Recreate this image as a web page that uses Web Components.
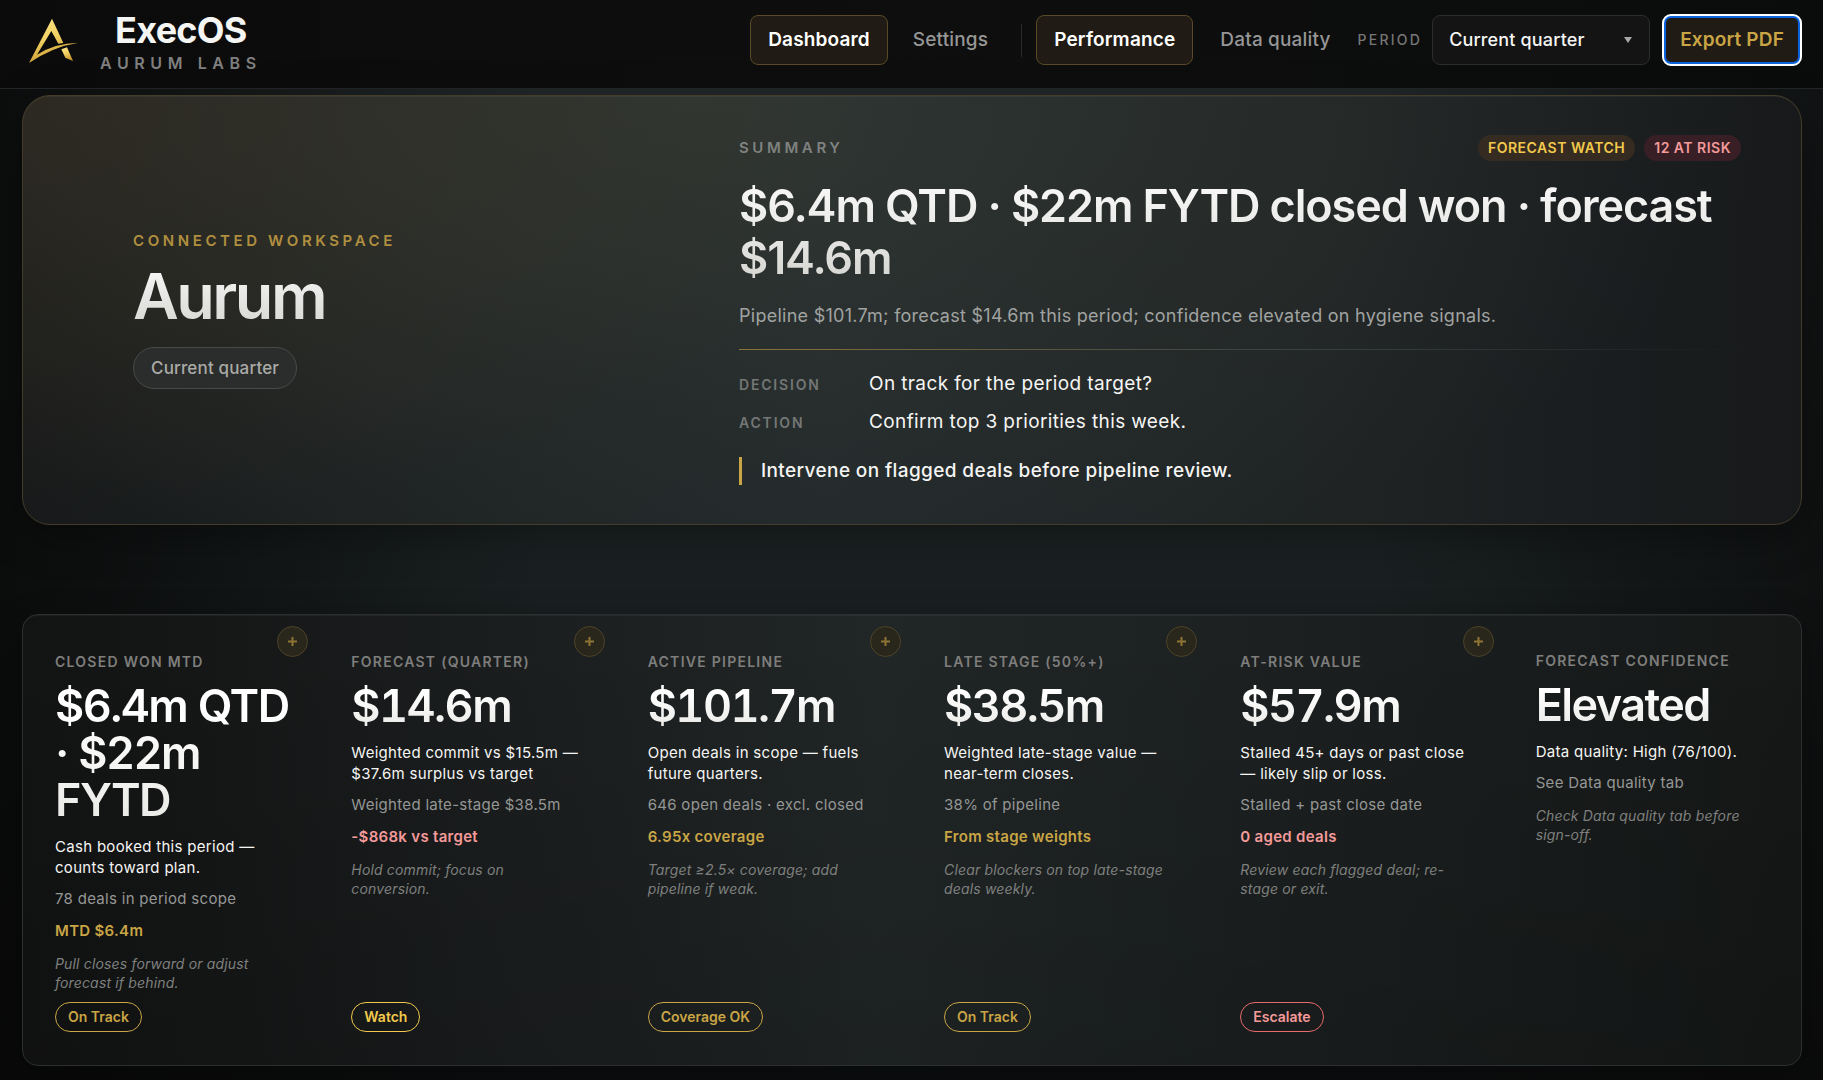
<!DOCTYPE html>
<html lang="en">
<head>
<meta charset="utf-8">
<meta name="viewport" content="width=device-width, initial-scale=1">
<title>ExecOS</title>
<style>
  :root {
    --text: #f5f5f3;
    --gold: #c9a545;
    --amber: #f2c94c;
    --rose: #f49a9a;
  }
  body {
    margin: 0;
    min-height: 100vh;
    font: 16px/1.4 Inter, "Liberation Sans", sans-serif;
    letter-spacing: 0.01em;
    color: var(--text);
    background:
      linear-gradient(90deg, rgba(8,8,8,.85) 0, rgba(8,8,8,0) 30%, rgba(8,8,8,0) 75%, rgba(10,10,10,.7) 100%),
      linear-gradient(180deg, #232a2c 0, #1a2021 54%, #0c0d0e 100%);
  }
</style>
</head>
<body>
<exec-header></exec-header>
<exec-main>
  <exec-hero workspace="Aurum" period="Current quarter">
    <status-pill slot="pills" tone="watch">Forecast watch</status-pill>
    <status-pill slot="pills" tone="risk">12 at risk</status-pill>
    <span slot="title">$6.4m QTD · $22m FYTD closed won · forecast $14.6m</span>
    <span slot="sub">Pipeline $101.7m; forecast $14.6m this period; confidence elevated on hygiene signals.</span>
    <span slot="decision">On track for the period target?</span>
    <span slot="action">Confirm top 3 priorities this week.</span>
    <span slot="callout">Intervene on flagged deals before pipeline review.</span>
  </exec-hero>
  <kpi-strip>
    <kpi-card expandable chip="On Track" tone="gold">
      <span slot="label">Closed won MTD</span><span slot="value">$6.4m QTD · $22m FYTD</span>
      <span slot="lead">Cash booked this period — counts toward plan.</span><span slot="meta">78 deals in period scope</span>
      <span slot="delta">MTD $6.4m</span><span slot="note">Pull closes forward or adjust forecast if behind.</span>
    </kpi-card>
    <kpi-card expandable chip="Watch" tone="amber" delta="down">
      <span slot="label">Forecast (quarter)</span><span slot="value">$14.6m</span>
      <span slot="lead">Weighted commit vs $15.5m — $37.6m surplus vs target</span><span slot="meta">Weighted late-stage $38.5m</span>
      <span slot="delta">-$868k vs target</span><span slot="note">Hold commit; focus on conversion.</span>
    </kpi-card>
    <kpi-card expandable chip="Coverage OK" tone="gold">
      <span slot="label">Active pipeline</span><span slot="value">$101.7m</span>
      <span slot="lead">Open deals in scope — fuels future quarters.</span><span slot="meta">646 open deals · excl. closed</span>
      <span slot="delta">6.95x coverage</span><span slot="note">Target ≥2.5× coverage; add pipeline if weak.</span>
    </kpi-card>
    <kpi-card expandable chip="On Track" tone="gold">
      <span slot="label">Late stage (50%+)</span><span slot="value">$38.5m</span>
      <span slot="lead">Weighted late-stage value — near-term closes.</span><span slot="meta">38% of pipeline</span>
      <span slot="delta">From stage weights</span><span slot="note">Clear blockers on top late-stage deals weekly.</span>
    </kpi-card>
    <kpi-card expandable chip="Escalate" tone="rose" delta="down">
      <span slot="label">At-risk value</span><span slot="value">$57.9m</span>
      <span slot="lead">Stalled 45+ days or past close — likely slip or loss.</span><span slot="meta">Stalled + past close date</span>
      <span slot="delta">0 aged deals</span><span slot="note">Review each flagged deal; re-stage or exit.</span>
    </kpi-card>
    <kpi-card>
      <span slot="label">Forecast confidence</span><span slot="value">Elevated</span>
      <span slot="lead">Data quality: High (76/100).</span><span slot="meta">See Data quality tab</span>
      <span slot="note">Check Data quality tab before sign-off.</span>
    </kpi-card>
  </kpi-strip>
</exec-main>

<script>
class Base extends HTMLElement {
  connectedCallback() {
    if (!this.shadowRoot) this.attachShadow({ mode: 'open' }).innerHTML =
      '<style>*{box-sizing:border-box}h1,h2,h3,p,dl,dd,dt{margin:0}</style>' + this.render();
  }
}

customElements.define('exec-logo', class extends Base {
  render() { return `
    <style>:host{display:block}svg{display:block;width:52px;height:47px}</style>
    <svg viewBox="85 50 156 141" aria-hidden="true">
      <defs><linearGradient id="g" x1="0" y1="0" x2=".35" y2="1">
        <stop offset="0" stop-color="#fbe58c"/><stop offset=".5" stop-color="#f3d264"/><stop offset="1" stop-color="#c99a2e"/>
      </linearGradient></defs>
      <path fill="url(#g)" d="M157 55 L191 128 L176 130 L155 92 L112 163 Q166 128 236 127 Q160 139 88 188 Z"/>
      <path fill="url(#g)" d="M185 147 L202 141 L220 182 L197 172 Z"/>
    </svg>`; }
});

customElements.define('nav-tab', class extends Base {
  render() {
    const on = this.hasAttribute('active');
    const inner = '<slot></slot>';
    const el = this.hasAttribute('href')
      ? `<a href="${this.getAttribute('href')}" ${on ? 'aria-current="page"' : ''}>${inner}</a>`
      : `<button type="button" aria-pressed="${on}">${inner}</button>`;
    return `<style>
      :host{display:block}
      a,button{display:flex;align-items:center;height:50px;padding:0 17px;border:1px solid transparent;border-radius:8px;
        background:none;color:#969696;font:500 19px/28px Inter,"Liberation Sans",sans-serif;letter-spacing:inherit;text-decoration:none;white-space:nowrap}
      :host([active]) a,:host([active]) button{color:#fff;font-weight:600;background:#201b14;border-color:#5a4a28}
    </style>${el}`;
  }
});

customElements.define('exec-header', class extends Base {
  render() { return `<style>
      :host{display:block;background:linear-gradient(90deg,#0a0b0a,#0e0e0e 50%,#0a0c0b);border-bottom:1px solid #222727}
      header{display:flex;align-items:center;justify-content:space-between;height:88px;padding:0 22px 8px 28px}
      .brand{display:flex;align-items:center;gap:20px}
      .names{display:flex;flex-direction:column;align-items:center;padding-top:5px}
      .name{font-size:36px;line-height:36px;font-weight:700;letter-spacing:-0.02em}
      .org{font-size:16px;line-height:20px;padding-top:5px;font-weight:600;letter-spacing:.35em;text-transform:uppercase;color:#808080}
      .tools{display:flex;align-items:center}
      nav{display:flex;gap:7px}
      .views{display:flex;gap:9px}
      .sep{width:1px;height:33px;margin:0 14px 0 15px;background:#2a2a2a}
      label{padding:0 10px 0 9px;font-size:14px;font-weight:500;letter-spacing:.16em;text-transform:uppercase;color:#777}
      .pick{display:grid;align-items:center;width:218px}
      .pick>*{grid-area:1/1}
      select{appearance:none;width:100%;height:50px;padding:0 40px 0 16px;border:1px solid #2c2c2c;border-radius:8px;background:#141414;
        color:var(--text);font:500 18px/24px Inter,"Liberation Sans",sans-serif;letter-spacing:inherit}
      svg{justify-self:end;width:8px;height:6px;margin-right:18px;pointer-events:none}
      .export{height:50px;margin-left:13px;padding:0 14px;border:3px solid #0a63dc;border-radius:8px;outline:2px solid #fff;outline-offset:-1px;background:#201b14;
        color:var(--gold);font:600 19px/28px Inter,"Liberation Sans",sans-serif;letter-spacing:inherit;white-space:nowrap}
    </style>
    <header>
      <div class="brand"><exec-logo></exec-logo><div class="names"><span class="name">ExecOS</span><span class="org">Aurum Labs</span></div></div>
      <div class="tools">
        <nav><nav-tab href="#dashboard" active>Dashboard</nav-tab><nav-tab href="#settings">Settings</nav-tab></nav>
        <span class="sep"></span>
        <div class="views"><nav-tab active>Performance</nav-tab><nav-tab>Data quality</nav-tab></div>
        <label for="period">Period</label>
        <div class="pick"><select id="period"><option>Current quarter</option></select>
          <svg viewBox="0 0 8 6" aria-hidden="true"><path fill="#a8a8a8" d="M0 0h8L4 6z"/></svg></div>
        <button class="export" type="button">Export PDF</button>
      </div>
    </header>`; }
});

customElements.define('exec-main', class extends Base {
  render() { return `<style>:host{display:flex;flex-direction:column;gap:89px;padding:6px 21px 14px 22px}</style><slot></slot>`; }
});

customElements.define('status-pill', class extends Base {
  render() { return `<style>
      :host{display:block;padding:0 10px;border-radius:13px;font-size:14px;line-height:26px;font-weight:600;letter-spacing:.035em;text-transform:uppercase;white-space:nowrap}
      :host([tone=watch]){color:var(--amber);background:#352b20}
      :host([tone=risk]){color:var(--rose);background:#381f26}
    </style><slot></slot>`; }
});

customElements.define('exec-hero', class extends Base {
  render() { return `<style>
      :host{display:block}
      section{display:grid;grid-template-columns:minmax(0,606px) minmax(0,1fr);align-items:center;min-height:430px;padding:38px 60px 38px 110px;
        border:1px solid #443c29;border-radius:28px;box-shadow:0 12px 40px rgba(0,0,0,.35), inset 0 1px 0 rgba(255,255,255,.05);
        background:
          radial-gradient(ellipse 50% 100% at 0 0, rgba(84,68,40,.27), rgba(84,68,40,0)),
          radial-gradient(ellipse 60% 120% at 38% 0, rgba(76,80,66,.34), rgba(66,70,60,0)),
          linear-gradient(90deg,#17191a 0,#1d2122 20%,#22292b 45%,#1f2324 74%,#17191b 100%)}
      .eyebrow{font-size:15px;line-height:20px;font-weight:600;letter-spacing:.24em;text-transform:uppercase;color:#b08f3f}
      h1,h2{font-weight:600;color:transparent;background:linear-gradient(180deg,#fafafa,#d4d4d0);-webkit-background-clip:text;background-clip:text}
      h1{width:max-content;margin:9px 0 15px;font-size:63px;line-height:72px;letter-spacing:-0.04em}
      .tag{display:inline-block;padding:0 17px;border:1px solid #474a49;border-radius:21px;background:#2a2d2b;color:#aaaaa7;font-size:17px;line-height:40px;font-weight:500}
      .top{display:flex;align-items:center;justify-content:space-between}
      .top .eyebrow{color:#7f8280}
      .pills{display:flex;gap:9px}
      h2{margin-top:19px;font-size:45px;line-height:52px;letter-spacing:-0.025em}
      .sub{margin-top:18px;font-size:18px;line-height:28px;letter-spacing:.015em;color:#a0a3a1}
      hr{height:1px;margin:19px 0 20px;border:0;background:linear-gradient(90deg,#8b733a,#3c4444 50%,rgba(60,68,68,0))}
      dl{display:grid;grid-template-columns:130px 1fr;row-gap:10px;align-items:baseline}
      dt{font-size:14px;line-height:20px;font-weight:600;letter-spacing:.13em;text-transform:uppercase;color:#747776}
      dd{font-size:19px;line-height:28px;letter-spacing:.02em}
      .call{margin-top:21px;padding-left:19px;border-left:3px solid #c9a545;font-size:19px;line-height:28px;font-weight:500;letter-spacing:.02em}
    </style>
    <section>
      <div><p class="eyebrow">Connected workspace</p><h1>${this.getAttribute('workspace')}</h1><span class="tag">${this.getAttribute('period')}</span></div>
      <div>
        <div class="top"><p class="eyebrow">Summary</p><div class="pills"><slot name="pills"></slot></div></div>
        <h2><slot name="title"></slot></h2>
        <p class="sub"><slot name="sub"></slot></p>
        <hr>
        <dl><dt>Decision</dt><dd><slot name="decision"></slot></dd><dt>Action</dt><dd><slot name="action"></slot></dd></dl>
        <p class="call"><slot name="callout"></slot></p>
      </div>
    </section>`; }
});

customElements.define('kpi-strip', class extends Base {
  render() { return `<style>
      :host{display:grid;grid-template-columns:repeat(6,minmax(0,1fr));min-height:450px;border:1px solid #2b2f2f;border-radius:16px;
        box-shadow:0 8px 32px rgba(0,0,0,.3), inset 0 1px 0 rgba(255,255,255,.05);
        background:linear-gradient(180deg,rgba(255,255,255,0),rgba(0,0,0,.14)),linear-gradient(90deg,#121313 0,#1d2021 33%,#212627 48%,#1c2020 70%,#161818 100%)}
    </style><slot></slot>`; }
});

customElements.define('kpi-card', class extends Base {
  render() {
    const chip = this.getAttribute('chip');
    const has = this.querySelector('[slot=delta]');
    return `<style>
      :host{display:flex;flex-direction:column;align-items:flex-start;position:relative;padding:36px 31px 32px}
      :host([expandable]){border:1px solid transparent}
      .more{position:absolute;top:10px;right:10px;display:grid;place-items:center;width:31px;height:31px;padding:0;border:1px solid #4e4328;border-radius:50%;background:#29261c}
      .more svg{width:11px;height:11px}
      .label{font-size:14px;line-height:20px;font-weight:600;letter-spacing:.09em;text-transform:uppercase;color:#7e7e7c}
      .value{margin:10px -12px 0 0;font-size:45px;line-height:47px;font-weight:600;letter-spacing:-0.035em;font-variant-numeric:tabular-nums;color:transparent;
        background:linear-gradient(180deg,#fff 20%,#e9e9e6);-webkit-background-clip:text;background-clip:text}
      .lead{margin-top:13px;font-size:15px;line-height:21px;letter-spacing:.02em}
      .meta,.delta{margin-top:11px;font-size:15px;line-height:21px;letter-spacing:.02em;color:#959795}
      .meta{margin-top:10px}
      .delta{font-weight:600;color:var(--gold)}
      :host([delta=down]) .delta{color:var(--rose)}
      .note{margin-top:13px;font-size:14px;line-height:19px;font-style:italic;color:#7e807e}
      .chip{margin-top:auto;padding:0 12px;border:1px solid;border-radius:15px;font-size:14px;line-height:28px;font-weight:600;letter-spacing:0;color:var(--gold)}
      :host([tone=amber]) .chip{color:var(--amber)}
      :host([tone=rose]) .chip{color:var(--rose);border-color:#e86a6a}
    </style>
    ${this.hasAttribute('expandable') ? '<button class="more" type="button" aria-label="Expand"><svg viewBox="0 0 11 11" aria-hidden="true"><path d="M5.5 1v9M1 5.5h9" stroke="#8d7434" stroke-width="2"/></svg></button>' : ''}
    <h3 class="label"><slot name="label"></slot></h3>
    <p class="value"><slot name="value"></slot></p>
    <p class="lead"><slot name="lead"></slot></p>
    <p class="meta"><slot name="meta"></slot></p>
    ${has ? '<p class="delta"><slot name="delta"></slot></p>' : ''}
    <p class="note"><slot name="note"></slot></p>
    ${chip ? `<span class="chip">${chip}</span>` : ''}`;
  }
});
</script>
</body>
</html>
